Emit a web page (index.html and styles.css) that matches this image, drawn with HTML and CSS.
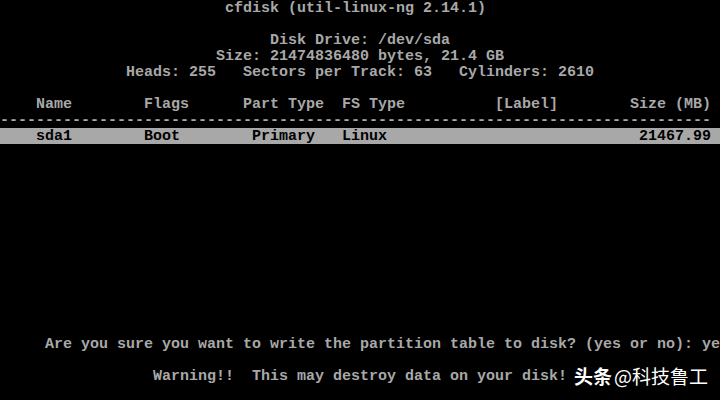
FILE: index.html
```html
<!DOCTYPE html>
<html>
<head>
<meta charset="utf-8">
<link rel="stylesheet" href="styles.css">
</head>
<body>
<div class="screen">
<div class="row">                         cfdisk (util-linux-ng 2.14.1)</div>
<div class="row"> </div>
<div class="row">                              Disk Drive: /dev/sda</div>
<div class="row">                        Size: 21474836480 bytes, 21.4 GB</div>
<div class="row">              Heads: 255   Sectors per Track: 63   Cylinders: 2610</div>
<div class="row"> </div>
<div class="row">    Name        Flags      Part Type  FS Type          [Label]        Size (MB)</div>
<div class="row">-------------------------------------------------------------------------------</div>
<div class="row sel">    sda1        Boot        Primary   Linux                            21467.99 </div>
<div class="row"> </div>
<div class="row"> </div>
<div class="row"> </div>
<div class="row"> </div>
<div class="row"> </div>
<div class="row"> </div>
<div class="row"> </div>
<div class="row"> </div>
<div class="row"> </div>
<div class="row"> </div>
<div class="row"> </div>
<div class="row"> </div>
<div class="row">     Are you sure you want to write the partition table to disk? (yes or no): ye</div>
<div class="row"> </div>
<div class="row">                 Warning!!  This may destroy data on your disk!</div>
<div class="row"> </div>
</div>
<div class="watermark"><span class="wm-brand">头条</span><span class="wm-name">@科技鲁工</span></div>
</body>
</html>
```

FILE: styles.css
```css
html, body {
  margin: 0;
  padding: 0;
  background: #000;
}
body {
  width: 720px;
  height: 400px;
  overflow: hidden;
  position: relative;
}
.screen {
  display: flex;
  flex-direction: column;
  width: 720px;
}
.row {
  height: 16px;
  line-height: 18px;
  font-family: "Liberation Mono", monospace;
  font-size: 15px;
  font-weight: bold;
  color: #a8a8a8;
  white-space: pre;
  overflow: hidden;
}
.sel {
  background: #a8a8a8;
  color: #000;
}
.watermark {
  position: absolute;
  left: 574px;
  top: 364px;
  font-family: "Noto Sans CJK SC", sans-serif;
  font-size: 19px;
  line-height: 24px;
  color: #fff;
  text-shadow: 0 0 2px rgba(0,0,0,0.6);
  white-space: nowrap;
}
.wm-brand {
  font-weight: bold;
  margin-right: 2px;
}
.wm-name {
  font-weight: normal;
}
```
